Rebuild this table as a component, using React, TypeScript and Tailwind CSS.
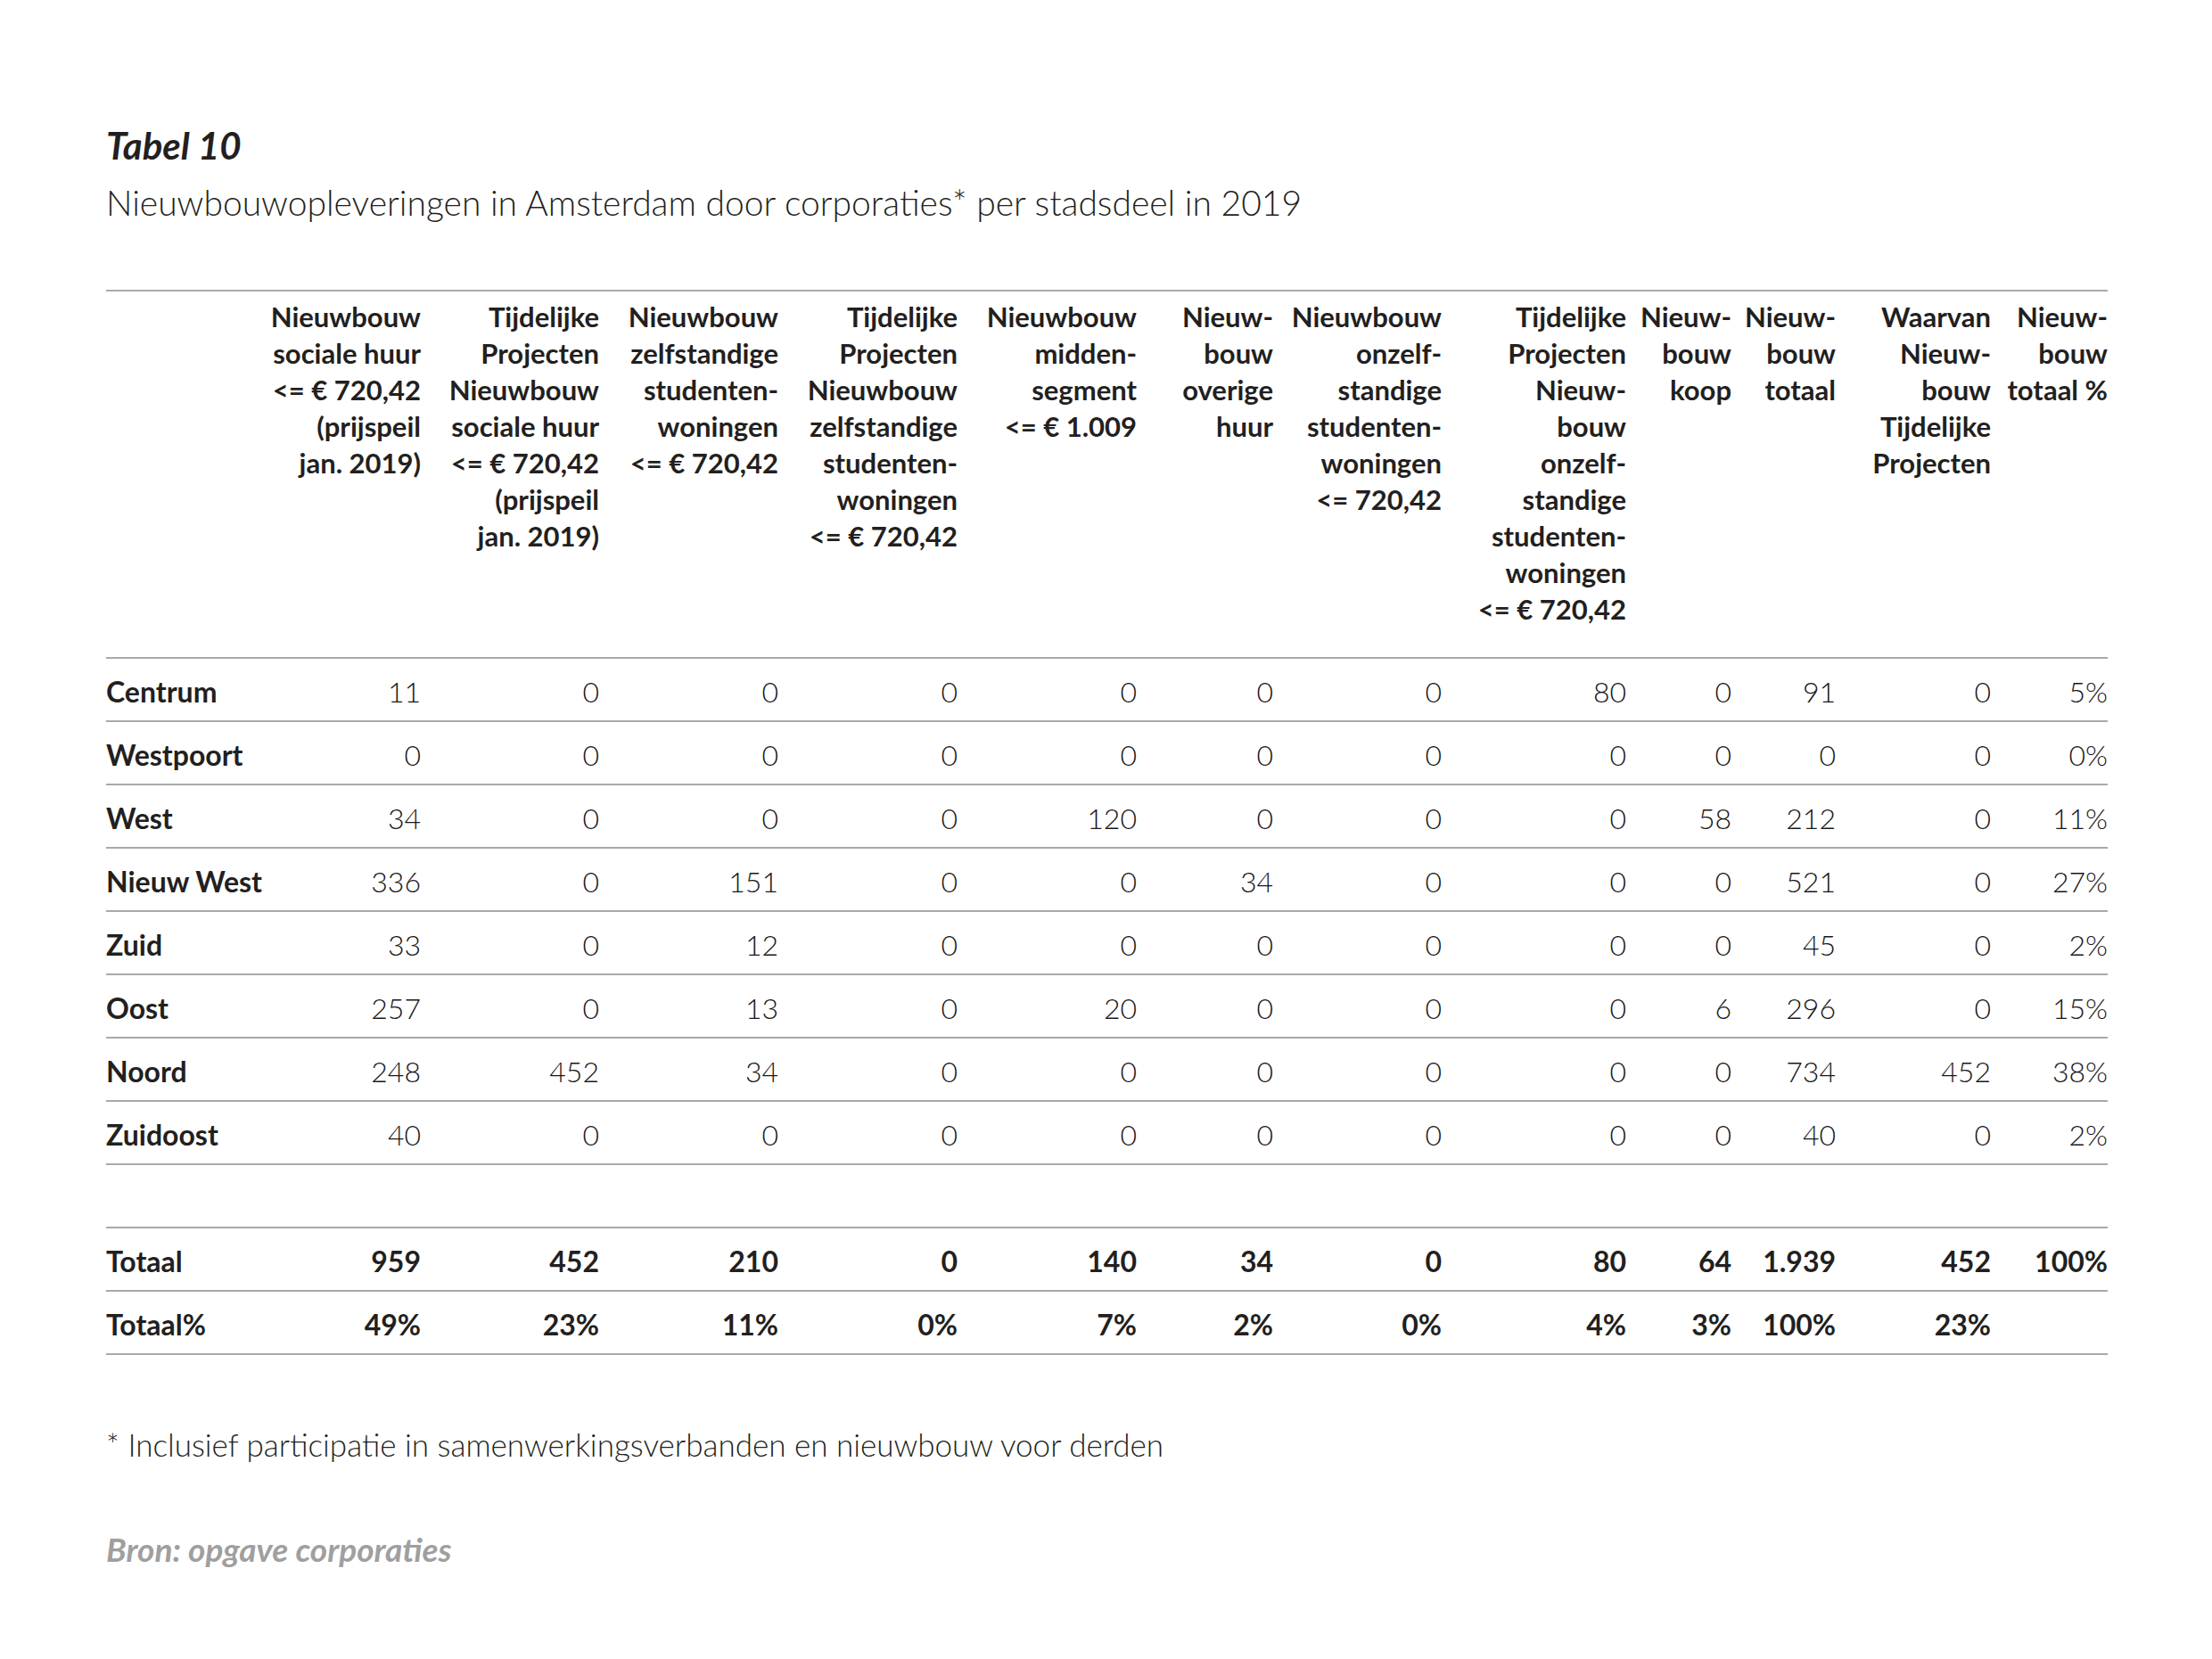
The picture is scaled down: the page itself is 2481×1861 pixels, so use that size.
import React from 'react';

const cols =
  'grid grid-cols-[171px_182px_200px_201px_201px_201px_153px_189px_207px_118px_117px_174px_131px]';

const headers: string[][] = [
  ['Nieuwbouw', 'sociale huur', '<= € 720,42', '(prijspeil', 'jan. 2019)'],
  ['Tijdelijke', 'Projecten', 'Nieuwbouw', 'sociale huur', '<= € 720,42', '(prijspeil', 'jan. 2019)'],
  ['Nieuwbouw', 'zelfstandige', 'studenten-', 'woningen', '<= € 720,42'],
  ['Tijdelijke', 'Projecten', 'Nieuwbouw', 'zelfstandige', 'studenten-', 'woningen', '<= € 720,42'],
  ['Nieuwbouw', 'midden-', 'segment', '<= € 1.009'],
  ['Nieuw-', 'bouw', 'overige', 'huur'],
  ['Nieuwbouw', 'onzelf-', 'standige', 'studenten-', 'woningen', '<= 720,42'],
  ['Tijdelijke', 'Projecten', 'Nieuw-', 'bouw', 'onzelf-', 'standige', 'studenten-', 'woningen', '<= € 720,42'],
  ['Nieuw-', 'bouw', 'koop'],
  ['Nieuw-', 'bouw', 'totaal'],
  ['Waarvan', 'Nieuw-', 'bouw', 'Tijdelijke', 'Projecten'],
  ['Nieuw-', 'bouw', 'totaal %'],
];

const rows: { label: string; values: string[] }[] = [
  { label: 'Centrum', values: ['11', '0', '0', '0', '0', '0', '0', '80', '0', '91', '0', '5%'] },
  { label: 'Westpoort', values: ['0', '0', '0', '0', '0', '0', '0', '0', '0', '0', '0', '0%'] },
  { label: 'West', values: ['34', '0', '0', '0', '120', '0', '0', '0', '58', '212', '0', '11%'] },
  { label: 'Nieuw West', values: ['336', '0', '151', '0', '0', '34', '0', '0', '0', '521', '0', '27%'] },
  { label: 'Zuid', values: ['33', '0', '12', '0', '0', '0', '0', '0', '0', '45', '0', '2%'] },
  { label: 'Oost', values: ['257', '0', '13', '0', '20', '0', '0', '0', '6', '296', '0', '15%'] },
  { label: 'Noord', values: ['248', '452', '34', '0', '0', '0', '0', '0', '0', '734', '452', '38%'] },
  { label: 'Zuidoost', values: ['40', '0', '0', '0', '0', '0', '0', '0', '0', '40', '0', '2%'] },
];

const totals: { label: string; values: string[] }[] = [
  { label: 'Totaal', values: ['959', '452', '210', '0', '140', '34', '0', '80', '64', '1.939', '452', '100%'] },
  { label: 'Totaal%', values: ['49%', '23%', '11%', '0%', '7%', '2%', '0%', '4%', '3%', '100%', '23%', ''] },
];

function Row({ label, values, bold }: { label: string; values: string[]; bold?: boolean }) {
  return (
    <div className={`${cols} h-[71px] border-b-2 border-[#a9a9a9] items-center`}>
      <div className="font-bold leading-[41px] pt-[4px] whitespace-nowrap">{label}</div>
      {values.map((v, i) => (
        <div
          key={i}
          className={`text-right leading-[41px] pt-[4px] whitespace-nowrap ${bold ? 'font-bold' : 'font-light text-[#1a1718]'}`}
        >
          {v}
        </div>
      ))}
    </div>
  );
}

export default function App() {
  return (
    <div className="min-h-screen w-full bg-white text-[#231f20] font-['Lato',sans-serif]">
      <div className="pl-[119px] pt-[142px] w-[2364px]">
        <h1 className="text-[42px] leading-[42px] font-bold italic">Tabel 10</h1>
        <p className="mt-[24px] text-[39px] leading-[38px] font-light">
          Nieuwbouwopleveringen in Amsterdam door corporaties* per stadsdeel in 2019
        </p>

        <div className="mt-[79px] border-t-2 border-[#a9a9a9] text-[32px]">
          {/* Header */}
          <div className={`${cols} h-[412px] border-b-2 border-[#a9a9a9] pt-[8px]`}>
            <div />
            {headers.map((lines, i) => (
              <div key={i} className="text-right text-[31px] font-bold leading-[41px] whitespace-nowrap">
                {lines.map((l, j) => (
                  <div key={j}>{l}</div>
                ))}
              </div>
            ))}
          </div>

          {rows.map((r) => (
            <Row key={r.label} label={r.label} values={r.values} />
          ))}

          {/* empty spacer row */}
          <div className="h-[71px] border-b-2 border-[#a9a9a9]" />

          {totals.map((r) => (
            <Row key={r.label} label={r.label} values={r.values} bold />
          ))}
        </div>

        <p className="mt-[82px] text-[35px] leading-[36px] font-light">
          * Inclusief participatie in samenwerkingsverbanden en nieuwbouw voor derden
        </p>
        <p className="mt-[81px] text-[37px] leading-[38px] font-bold italic text-[#9f9f9f]">
          Bron: opgave corporaties
        </p>
      </div>
    </div>
  );
}
